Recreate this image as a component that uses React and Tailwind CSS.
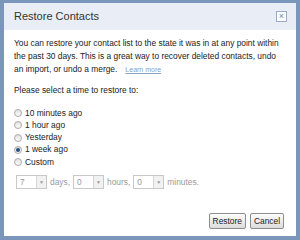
const OPTIONS = ['10 minutes ago', '1 hour ago', 'Yesterday', '1 week ago', 'Custom'];

function Radio({ checked, label }) {
    return (
        <div className="flex h-[12.25px] items-center gap-[3px]">
            <span className="flex h-[8px] w-[8px] items-center justify-center rounded-full border border-[#a9a9a9] bg-[linear-gradient(#e2e2e2,#fbfbfb)]">
                {checked && <span className="h-[4px] w-[4px] rounded-full bg-[#274c7a]" />}
            </span>
            <span>{label}</span>
        </div>
    );
}

function Combo({ value }) {
    return (
        <div className="flex h-[14px] w-[31px] items-stretch border border-[#c8c8c8] bg-white">
            <span className="flex-1 pl-[3px] leading-[12px] text-[#9a9a9a]">{value}</span>
            <span className="flex w-[10px] items-center justify-center border-l border-[#d6d6d6] bg-[#f1f1f1] text-[5px] text-[#9a9a9a]">
                ▼
            </span>
        </div>
    );
}

function Button({ children }) {
    return (
        <button className="h-[16px] rounded-[2px] border border-[#8e8e8e] bg-[linear-gradient(#fdfdfd,#dcdcdc)] px-[3px] text-[8.4px] leading-[14px] text-[#222]">
            {children}
        </button>
    );
}

export default function App() {
    return (
        <div className="h-[240px] w-[300px] bg-[#7a97bb] p-[4px] pt-[3px] font-['Liberation_Sans',Arial,sans-serif]">
            <div className="flex h-full flex-col bg-white">
                <div className="flex h-[27px] items-center justify-between bg-[#e9eef6] pl-[10px] pr-[9px]">
                    <span className="text-[11px] text-[#333]">Restore Contacts</span>
                    <span className="flex h-[11px] w-[11px] items-center justify-center border border-[#97acc9] bg-white text-[9px] leading-none text-[#6a86ad]">
                        ×
                    </span>
                </div>
                <div className="flex flex-1 flex-col px-[10px] pt-[7px] text-[8.4px] leading-[13px] text-[#222]">
                    <p className="whitespace-nowrap">
                        You can restore your contact list to the state it was in at any point within
                        <br />
                        the past 30 days. This is a great way to recover deleted contacts, undo
                        <br />
                        an import, or undo a merge.
                        <span className="ml-[8px] text-[7px] text-[#8aa3c3] underline">Learn more</span>
                    </p>
                    <p className="mt-[8px]">Please select a time to restore to:</p>
                    <div className="mt-[10px] flex flex-col">
                        {OPTIONS.map((o) => (
                            <Radio key={o} label={o} checked={o === '1 week ago'} />
                        ))}
                    </div>
                    <div className="mt-[7px] flex items-center gap-[3px] pl-[2px] text-[#9a9a9a]">
                        <Combo value="7" />
                        <span>days,</span>
                        <Combo value="0" />
                        <span>hours,</span>
                        <Combo value="0" />
                        <span>minutes.</span>
                    </div>
                    <div className="mt-auto mb-[7px] mr-[2px] flex justify-end gap-[4px]">
                        <Button>Restore</Button>
                        <Button>Cancel</Button>
                    </div>
                </div>
            </div>
        </div>
    );
}
